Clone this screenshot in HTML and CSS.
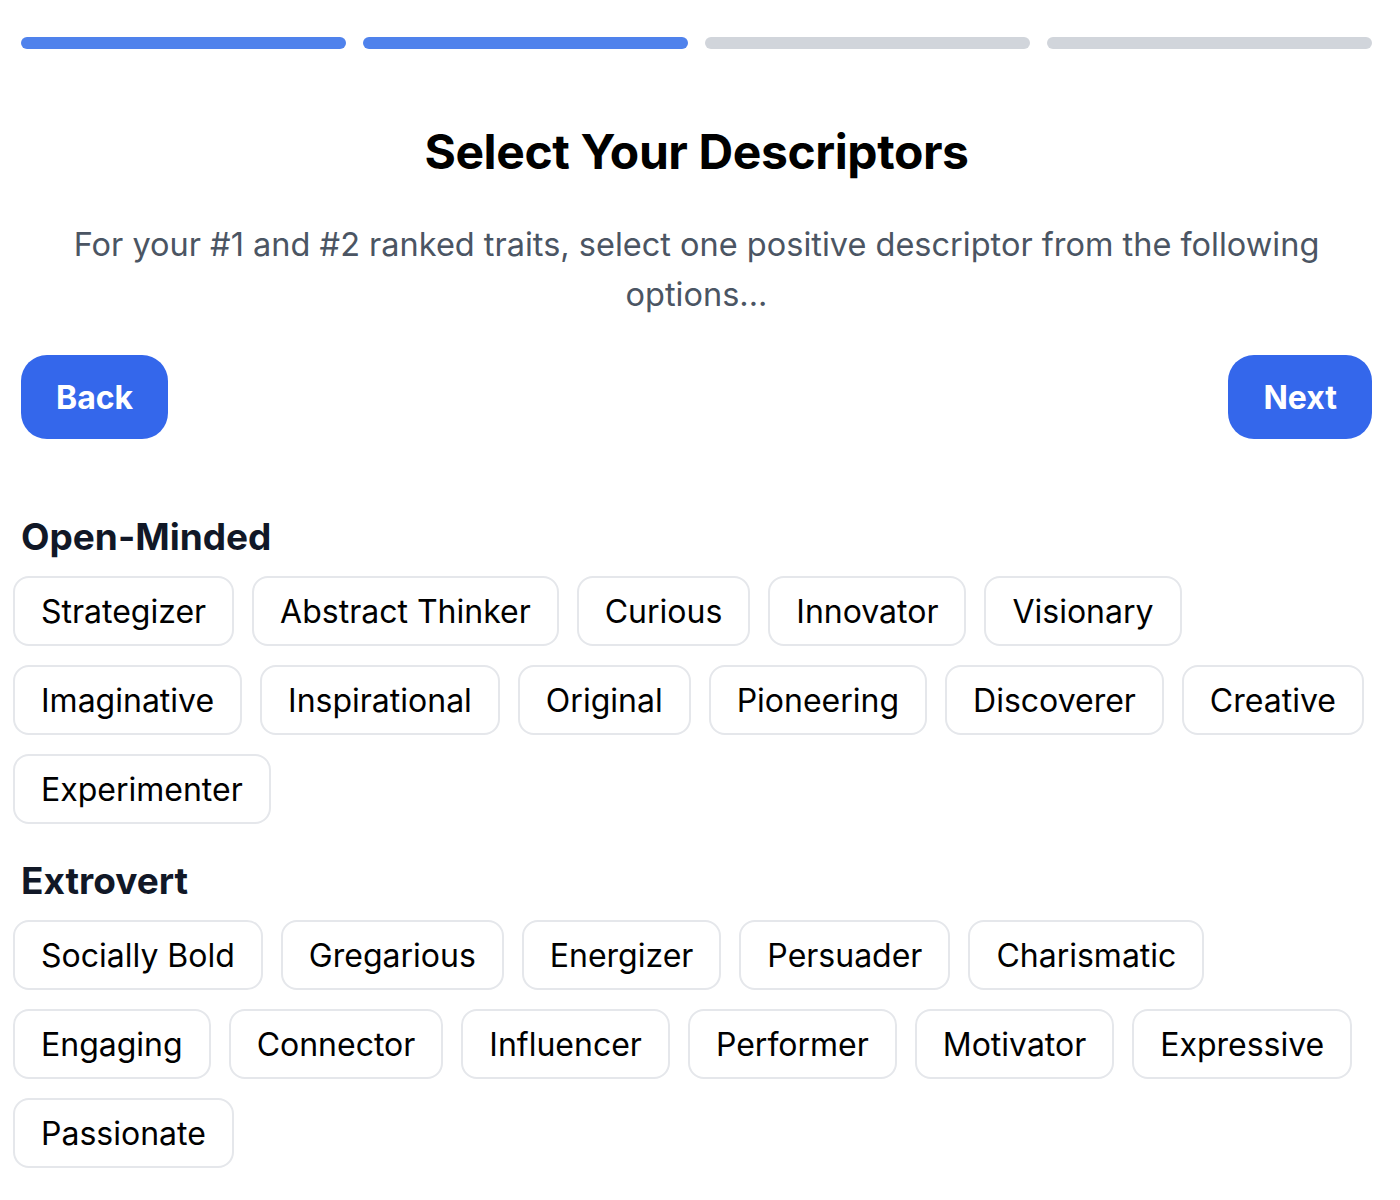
FILE: index.html
```html
<!DOCTYPE html>
<html lang="en">
<head>
<meta charset="utf-8">
<title>Select Your Descriptors</title>
<link rel="stylesheet" href="styles.css">
</head>
<body>
<div class="page">
  <div class="progress">
    <div class="step done"></div>
    <div class="step done"></div>
    <div class="step"></div>
    <div class="step"></div>
  </div>

  <h1 class="title">Select Your Descriptors</h1>
  <p class="subtitle">For your #1 and #2 ranked traits, select one positive descriptor from the following options...</p>

  <div class="nav">
    <button class="btn">Back</button>
    <button class="btn">Next</button>
  </div>

  <section class="group first">
    <h2 class="group-title">Open-Minded</h2>
    <div class="chips">
      <button class="chip">Strategizer</button>
      <button class="chip">Abstract Thinker</button>
      <button class="chip">Curious</button>
      <button class="chip">Innovator</button>
      <button class="chip">Visionary</button>
      <button class="chip">Imaginative</button>
      <button class="chip">Inspirational</button>
      <button class="chip">Original</button>
      <button class="chip">Pioneering</button>
      <button class="chip">Discoverer</button>
      <button class="chip">Creative</button>
      <button class="chip">Experimenter</button>
    </div>
  </section>

  <section class="group">
    <h2 class="group-title">Extrovert</h2>
    <div class="chips">
      <button class="chip">Socially Bold</button>
      <button class="chip">Gregarious</button>
      <button class="chip">Energizer</button>
      <button class="chip">Persuader</button>
      <button class="chip">Charismatic</button>
      <button class="chip">Engaging</button>
      <button class="chip">Connector</button>
      <button class="chip">Influencer</button>
      <button class="chip">Performer</button>
      <button class="chip">Motivator</button>
      <button class="chip">Expressive</button>
      <button class="chip">Passionate</button>
    </div>
  </section>
</div>
</body>
</html>
```

FILE: styles.css
```css
* {
  box-sizing: border-box;
}

html, body {
  margin: 0;
  padding: 0;
  background: #ffffff;
}

body {
  font-family: Inter, "Noto Sans", "Liberation Sans", sans-serif;
  color: #000;
}

.page {
  padding: 37px 28px 0 21px;
}

.progress {
  display: flex;
  gap: 17px;
}

.step {
  flex: 1;
  height: 12px;
  border-radius: 6px;
  background: #d1d5db;
}

.step.done {
  background: #4f82ec;
}

.title {
  margin: 72px 0 0;
  text-align: center;
  font-size: 48px;
  line-height: 62px;
  font-weight: 700;
  letter-spacing: -0.4px;
  color: #000;
}

.subtitle {
  margin: 37px 0 0;
  text-align: center;
  font-size: 32.5px;
  line-height: 50px;
  font-weight: 400;
  color: #4b5563;
}

.nav {
  display: flex;
  justify-content: space-between;
  margin-top: 35px;
}

.btn {
  height: 84px;
  padding: 0 35px;
  border: none;
  border-radius: 26px;
  background: #3467eb;
  color: #fff;
  font-family: inherit;
  font-size: 32px;
  font-weight: 700;
  cursor: pointer;
}

.group {
  margin-top: 35px;
}

.group.first {
  margin-top: 76px;
}

.group-title {
  margin: 0 0 17px;
  font-size: 37px;
  line-height: 44px;
  font-weight: 700;
  color: #111827;
}

.chips {
  display: flex;
  flex-wrap: wrap;
  gap: 19px 18px;
  margin-left: -8px;
}

.chip {
  height: 70px;
  padding: 0 26px;
  border: 2px solid #e5e7eb;
  border-radius: 16px;
  background: #fff;
  color: #000;
  font-family: inherit;
  font-size: 32px;
  font-weight: 400;
  cursor: pointer;
}
```
